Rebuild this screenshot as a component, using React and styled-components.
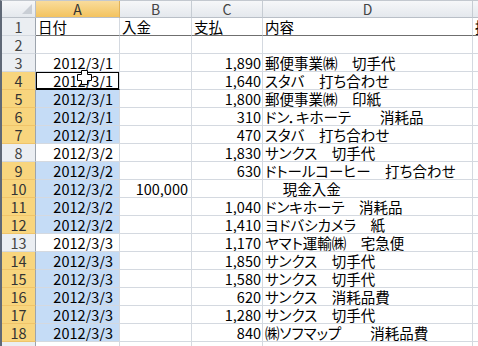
import React from "react";
import styled, { createGlobalStyle, css } from "styled-components";

const GlobalStyle = createGlobalStyle`
  html, body {
    margin: 0;
    padding: 0;
    background: #ffffff;
    overflow: hidden;
  }
`;

const font = `"Noto Sans CJK JP", "Noto Sans", sans-serif`;

const Window = styled.div`
  position: relative;
  width: 478px;
  height: 346px;
  overflow: hidden;
  border-left: 2px solid #5f6876;
  border-top: 1px solid #c3c8cf;
  box-sizing: border-box;
  font-family: ${font};
`;

const Sheet = styled.div`
  display: grid;
  grid-template-columns: 34px 84px 72px 71px 210px 80px;
  grid-template-rows: 17px;
  grid-auto-rows: 18px;
  width: max-content;
`;

const headerBg = css`
  background: linear-gradient(#f6f7f9, #e4e8ed);
  color: #444;
`;

const selectedBg = css`
  background: linear-gradient(#f9dc9c, #f3c35f);
  color: #333;
`;

const Corner = styled.div`
  position: relative;
  ${headerBg};
  border-right: 1px solid #b9bfc7;
  border-bottom: 1px solid #b9bfc7;
  box-sizing: border-box;

  &::after {
    content: "";
    position: absolute;
    right: 3px;
    bottom: 3px;
    border-style: solid;
    border-width: 0 0 10px 10px;
    border-color: transparent transparent #c9ced5 transparent;
  }
`;

const ColHeader = styled.div`
  ${(p) => (p.$selected ? selectedBg : headerBg)};
  border-right: 1px solid ${(p) => (p.$selected ? "#e2b35a" : "#c6ccd3")};
  border-bottom: 1px solid #b9bfc7;
  box-sizing: border-box;
  display: flex;
  align-items: center;
  justify-content: center;
  font-size: 14px;
  line-height: 16px;
  overflow: hidden;
`;

const RowHeader = styled.div`
  ${(p) =>
    p.$selected
      ? css`
          background: #f8d57e;
          color: #333;
        `
      : css`
          background: #ebeef2;
          color: #444;
        `};
  border-right: 1px solid #9da4ad;
  border-bottom: 1px solid ${(p) => (p.$selected ? "#f0c46a" : "#d3d8df")};
  box-sizing: border-box;
  display: flex;
  align-items: flex-end;
  justify-content: center;
  font-size: 14.5px;
  line-height: 17px;
`;

const Cell = styled.div`
  background: ${(p) => (p.$selected ? "#c5dcf6" : "#ffffff")};
  border-right: 1px solid #d4d9e0;
  border-bottom: 1px solid ${(p) => (p.$freeze ? "#6f6f6f" : "#d4d9e0")};
  box-sizing: border-box;
  display: flex;
  align-items: flex-end;
  justify-content: ${(p) => (p.$align === "right" ? "flex-end" : "flex-start")};
  padding: 0 ${(p) => p.$padRight ?? 1}px 0 2px;
  font-size: 14.5px;
  line-height: 17px;
  color: #000;
  white-space: pre;
  overflow: hidden;
  font-feature-settings: ${(p) => (p.$prop ? `"palt"` : "normal")};
  ${(p) =>
    p.$active &&
    css`
      box-shadow: inset 0 0 0 1px #000;
      border-bottom-color: #000;
    `}
`;

const Cursor = styled.svg`
  position: absolute;
  left: 75px;
  top: 69px;
  pointer-events: none;
`;

const rows = [
  ["2012/3/1", "", "1,890", "郵便事業㈱　切手代"],
  ["2012/3/1", "", "1,640", "スタバ　打ち合わせ"],
  ["2012/3/1", "", "1,800", "郵便事業㈱　印紙"],
  ["2012/3/1", "", "310", "ドン．キホーテ　　消耗品"],
  ["2012/3/1", "", "470", "スタバ　打ち合わせ"],
  ["2012/3/2", "", "1,830", "サンクス　切手代"],
  ["2012/3/2", "", "630", "ドトールコーヒー　打ち合わせ"],
  ["2012/3/2", "100,000", "", "　 現金入金"],
  ["2012/3/2", "", "1,040", "ドンキホーテ　消耗品"],
  ["2012/3/2", "", "1,410", "ヨドバシカメラ　紙"],
  ["2012/3/3", "", "1,170", "ヤマト運輸㈱　宅急便"],
  ["2012/3/3", "", "1,850", "サンクス　切手代"],
  ["2012/3/3", "", "1,580", "サンクス　切手代"],
  ["2012/3/3", "", "620", "サンクス　消耗品費"],
  ["2012/3/3", "", "1,280", "サンクス　切手代"],
  ["2012/3/3", "", "840", "㈱ソフマップ　　消耗品費"],
];

const unselectedRows = [1, 2, 3, 8, 13, 19];
const activeRow = 4;

export default function App() {
  return (
    <>
      <GlobalStyle />
      <Window>
        <Sheet>
          <Corner />
          <ColHeader $selected>A</ColHeader>
          <ColHeader>B</ColHeader>
          <ColHeader>C</ColHeader>
          <ColHeader>D</ColHeader>
          <ColHeader>E</ColHeader>

          <RowHeader>1</RowHeader>
          <Cell $freeze>日付</Cell>
          <Cell $freeze>入金</Cell>
          <Cell $freeze>支払</Cell>
          <Cell $freeze>内容</Cell>
          <Cell $freeze>摘要</Cell>

          <RowHeader>2</RowHeader>
          <Cell />
          <Cell />
          <Cell />
          <Cell />
          <Cell />

          {rows.map((r, i) => {
            const n = i + 3;
            const sel = !unselectedRows.includes(n);
            return (
              <React.Fragment key={n}>
                <RowHeader $selected={sel}>{n}</RowHeader>
                <Cell
                  $align="right"
                  $padRight={6}
                  $selected={sel && n !== activeRow}
                  $active={n === activeRow}
                >
                  {r[0]}
                </Cell>
                <Cell $align="right" $padRight={3}>
                  {r[1]}
                </Cell>
                <Cell $align="right">{r[2]}</Cell>
                <Cell $prop>{r[3]}</Cell>
                <Cell />
              </React.Fragment>
            );
          })}

          <RowHeader>19</RowHeader>
          <Cell />
          <Cell />
          <Cell />
          <Cell />
          <Cell />
        </Sheet>

        <Cursor width="16" height="16" viewBox="0 0 16 16">
          <polygon
            points="4.5,0.5 10.5,0.5 10.5,4.5 14.5,4.5 14.5,10.5 10.5,10.5 10.5,14.5 4.5,14.5 4.5,10.5 0.5,10.5 0.5,4.5 4.5,4.5"
            fill="#ffffff"
            stroke="#000000"
            strokeWidth="1"
          />
        </Cursor>
      </Window>
    </>
  );
}
